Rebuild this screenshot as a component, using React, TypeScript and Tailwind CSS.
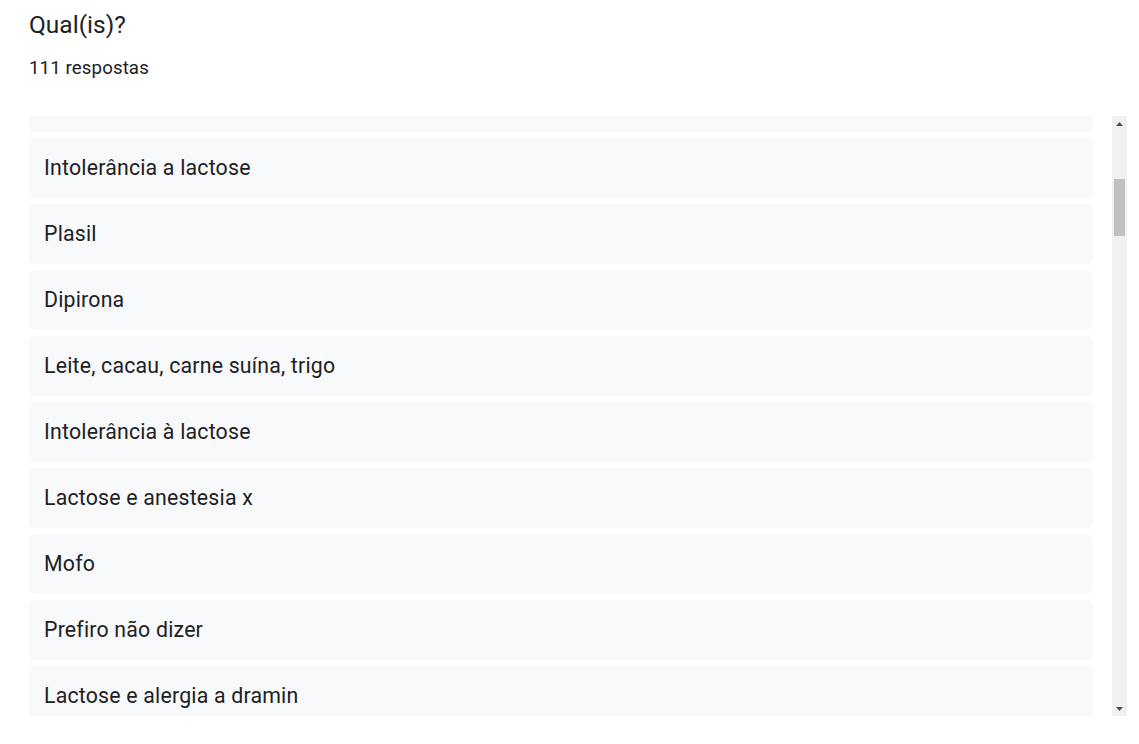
import React from 'react';

const answers = [
  'Intolerância a lactose',
  'Plasil',
  'Dipirona',
  'Leite, cacau, carne suína, trigo',
  'Intolerância à lactose',
  'Lactose e anestesia x',
  'Mofo',
  'Prefiro não dizer',
  'Lactose e alergia a dramin',
];

function ScrollArrow({ up }: { up?: boolean }) {
  return (
    <div className="flex h-[15px] w-[15px] items-center justify-center">
      <svg width="7" height="4" viewBox="0 0 7 4">
        <path d={up ? 'M0 4 L3.5 0 L7 4 Z' : 'M0 0 L3.5 4 L7 0 Z'} fill="#505050" />
      </svg>
    </div>
  );
}

export default function App() {
  return (
    <div
      className="min-h-[744px] bg-white pl-[29px] pr-[12px] pt-[10px] text-[#202124]"
      style={{ fontFamily: 'Roboto, "Liberation Sans", sans-serif' }}
    >
      <h1 className="text-[24.5px] leading-[30px]">Qual(is)?</h1>
      <p className="mt-[16px] text-[18.7px] leading-[24px] tracking-[0.1px]">111 respostas</p>

      <div className="mt-[36px] flex h-[600px] gap-[19px]">
        {/* Answer list */}
        <div className="flex-1 overflow-hidden">
          <div className="mt-[-44px] flex flex-col gap-[6px]">
            <div className="h-[60px] rounded-[6px] bg-[#f8f9fa]" />
            {answers.map((a, i) => (
              <div
                key={i}
                className="flex h-[60px] shrink-0 items-center rounded-[6px] bg-[#f8f9fa] px-[15px] text-[21.3px] tracking-[0.2px]"
              >
                {a}
              </div>
            ))}
          </div>
        </div>

        {/* Scrollbar */}
        <div className="flex w-[15px] flex-col bg-[#f1f1f1]">
          <ScrollArrow up />
          <div className="relative flex-1">
            <div className="absolute left-[2px] right-[2px] top-[48px] h-[57px] bg-[#c1c1c1]" />
          </div>
          <ScrollArrow />
        </div>
      </div>
    </div>
  );
}
